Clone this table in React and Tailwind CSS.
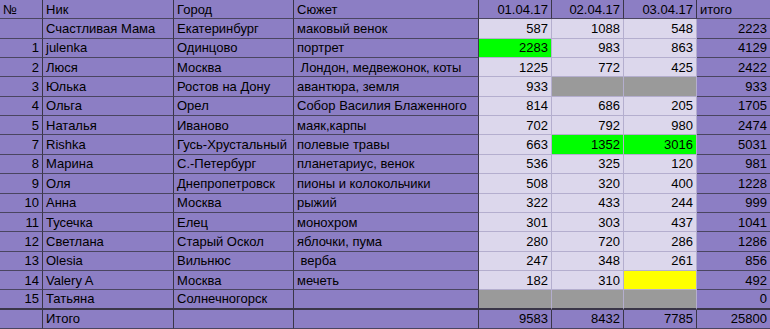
import React from "react";

const P = "bg-[#8c7ec4]";
const L = "bg-[#dcd7ec]";

const rows = [
  ["", "Счастливая Мама", "Екатеринбург", "маковый венок", "587", "1088", "548", "2223"],
  ["1", "julenka", "Одинцово", "портрет", ["2283", "g"], "983", "863", "4129"],
  ["2", "Люся", "Москва", "\u00a0Лондон, медвежонок, коты", "1225", "772", "425", "2422"],
  ["3", "Юлька", "Ростов на Дону", "авантюра, земля", "933", ["", "x"], ["", "x"], "933"],
  ["4", "Ольга", "Орел", "Собор Василия Блаженного", "814", "686", "205", "1705"],
  ["5", "Наталья", "Иваново", "маяк,карпы", "702", "792", "980", "2474"],
  ["7", "Rishka", "Гусь-Хрустальный", "полевые травы", "663", ["1352", "g"], ["3016", "g"], "5031"],
  ["8", "Марина", "С.-Петербург", "планетариус, венок", "536", "325", "120", "981"],
  ["9", "Оля", "Днепропетровск", "пионы и колокольчики", "508", "320", "400", "1228"],
  ["10", "Анна", "Москва", "рыжий", "322", "433", "244", "999"],
  ["11", "Тусечка", "Елец", "монохром", "301", "303", "437", "1041"],
  ["12", "Светлана", "Старый Оскол", "яблочки, пума", "280", "720", "286", "1286"],
  ["13", "Olesia", "Вильнюс", "\u00a0верба", "247", "348", "261", "856"],
  ["14", "Valery A", "Москва", "мечеть", "182", "310", ["", "y"], "492"],
  ["15", "Татьяна", "Солнечногорск", "", ["", "x"], ["", "x"], ["", "x"], "0"],
];

function Cell({ children, bg, right, light, last, thick }) {
  return (
    <div
      className={`${bg} ${right ? "justify-end pr-[3px]" : "justify-start pl-[3px]"} flex items-center overflow-hidden whitespace-nowrap ${
        last ? "" : light ? "border-r border-r-[#b4aece]" : "border-r border-r-[#3a3648]"
      } ${thick ? "border-b-2 border-b-[#3a3648]" : light ? "border-b border-b-[#b4aece]" : "border-b border-b-[#4a4560]"}`}
    >
      {children}
    </div>
  );
}

export default function App() {
  return (
    <div
      className="w-[770px] h-[329px] grid grid-cols-[43px_131px_120px_185px_73px_72px_73px_73px] grid-rows-[repeat(17,minmax(0,1fr))] text-[13px] leading-none text-black bg-[#8c7ec4]"
      style={{ fontFamily: '"Liberation Sans", Arial, sans-serif' }}
    >
      <Cell bg={P}>№</Cell>
      <Cell bg={P}>Ник</Cell>
      <Cell bg={P}>Город</Cell>
      <Cell bg={P}>Сюжет</Cell>
      <Cell bg={P} right>01.04.17</Cell>
      <Cell bg={P} right>02.04.17</Cell>
      <Cell bg={P} right>03.04.17</Cell>
      <Cell bg={P} last>итого</Cell>
      {rows.map((r, i) => {
        const thick = i === rows.length - 1;
        return (
          <React.Fragment key={i}>
            <Cell bg={P} right thick={thick}>{r[0]}</Cell>
            <Cell bg={P} thick={thick}>{r[1]}</Cell>
            <Cell bg={P} thick={thick}>{r[2]}</Cell>
            <Cell bg={P} thick={thick}>{r[3]}</Cell>
            {[4, 5, 6].map((j) => {
              const v = r[j];
              let text = v;
              let bg = L;
              if (Array.isArray(v)) {
                text = v[0];
                bg = v[1] === "g" ? "bg-[#00ff00]" : v[1] === "y" ? "bg-[#ffff00]" : "bg-[#9a9a9a]";
              }
              return (
                <Cell key={j} bg={bg} right light thick={thick}>
                  {text}
                </Cell>
              );
            })}
            <Cell bg={P} right last thick={thick}>{r[7]}</Cell>
          </React.Fragment>
        );
      })}
      <Cell bg={P}></Cell>
      <Cell bg={P}>Итого</Cell>
      <Cell bg={P}></Cell>
      <Cell bg={P}></Cell>
      <Cell bg={P} right>9583</Cell>
      <Cell bg={P} right>8432</Cell>
      <Cell bg={P} right>7785</Cell>
      <Cell bg={P} right last>25800</Cell>
    </div>
  );
}
